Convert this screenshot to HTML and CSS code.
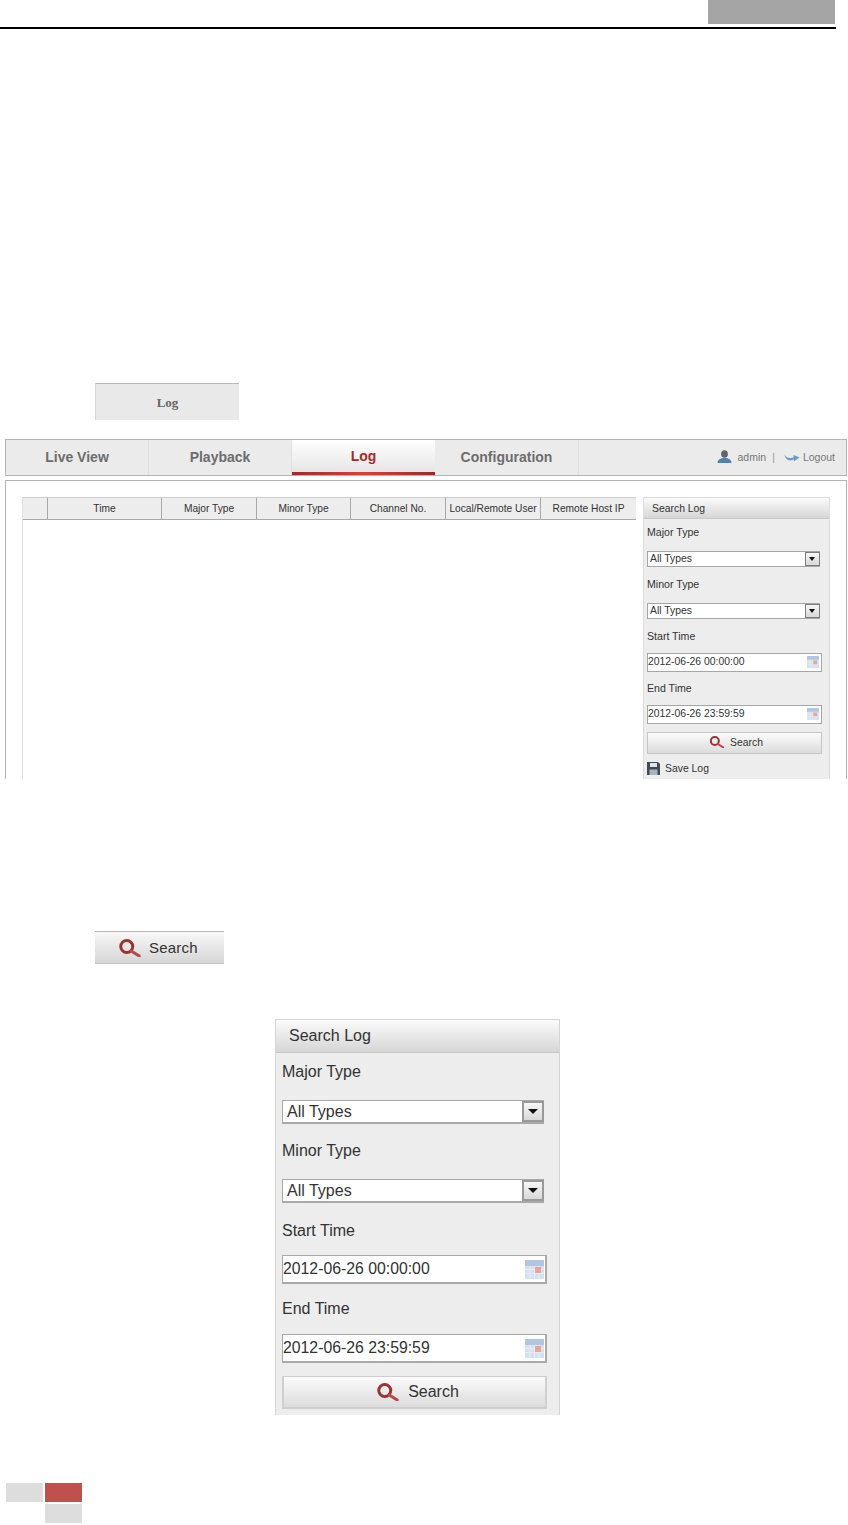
FILE: index.html
```html
<!DOCTYPE html>
<html lang="en">
<head>
<meta charset="utf-8">
<title>Log</title>
<link rel="stylesheet" href="styles.css">
</head>
<body>
<svg class="defs" width="0" height="0" aria-hidden="true">
  <defs>
    <symbol id="i-search" viewBox="1.5 0 22.5 18">
      <circle cx="9.5" cy="7.5" r="6" fill="none" stroke="#9a3336" stroke-width="3"/>
      <path d="M14 12l8 5" fill="none" stroke="#b8474a" stroke-width="3" stroke-linecap="round"/>
    </symbol>
    <symbol id="i-cal" viewBox="0 0 19 19">
      <rect x="0" y="0" width="19" height="19" rx="1" fill="#d6e0ee"/>
      <rect x="0" y="0" width="19" height="6" fill="#b3c6df"/>
      <path d="M0 9.5h19M0 13.5h19M5 6v13M9.5 6v13M14 6v13" stroke="#e9eef5" stroke-width="1"/>
      <rect x="10" y="7" width="6" height="6" fill="#eba598"/>
    </symbol>
  </defs>
</svg>

<header class="page-head">
  <div class="chapter-tag"></div>
</header>
<div class="page-rule"></div>

<div class="log-tab-shot">Log</div>

<section class="app">
  <nav class="tabs">
    <div class="tab">Live View</div>
    <div class="tab">Playback</div>
    <div class="tab tab-active">Log</div>
    <div class="tab tab-last">Configuration</div>
    <div class="user">
      <svg class="user-icon" viewBox="0 0 15 13" aria-hidden="true">
        <ellipse cx="7.5" cy="4" rx="3.4" ry="3.8" fill="#5f6468"/>
        <path d="M0.5 13c0-3.4 3-5 7-5s7 1.6 7 5z" fill="#4f81b5"/>
      </svg>
      <span>admin</span>
      <span class="user-sep">|</span>
      <svg class="logout-icon" viewBox="0 0 16 10" aria-hidden="true">
        <path d="M0.5 2.5C2 6 6 6.5 9.5 5.5V3L15.5 5.6 9.8 9.5V7.6C6 9.4 1.5 8.4 0.5 2.5z" fill="#6f9ac6"/>
      </svg>
      <span>Logout</span>
    </div>
  </nav>

  <div class="content">
    <div class="log-table">
      <div class="log-head">
        <div class="th"></div>
        <div class="th">Time</div>
        <div class="th">Major Type</div>
        <div class="th">Minor Type</div>
        <div class="th">Channel No.</div>
        <div class="th">Local/Remote User</div>
        <div class="th">Remote Host IP</div>
      </div>
    </div>

    <aside class="sp">
      <div class="sp-title">Search Log</div>
      <div class="sp-body">
        <div class="sp-label">Major Type</div>
        <div class="sp-select"><span class="sp-value">All Types</span><span class="sp-arrow"></span></div>
        <div class="sp-label">Minor Type</div>
        <div class="sp-select"><span class="sp-value">All Types</span><span class="sp-arrow"></span></div>
        <div class="sp-label">Start Time</div>
        <div class="sp-date"><span>2012-06-26 00:00:00</span><svg class="sp-cal"><use href="#i-cal"/></svg></div>
        <div class="sp-label">End Time</div>
        <div class="sp-date"><span>2012-06-26 23:59:59</span><svg class="sp-cal"><use href="#i-cal"/></svg></div>
        <div class="sp-button"><svg class="sp-mag"><use href="#i-search"/></svg><span>Search</span></div>
        <div class="sp-save">
          <svg class="save-icon" viewBox="0 0 13 13" aria-hidden="true">
            <path d="M0 0h11l2 2v11H0z" fill="#3f4a54"/>
            <rect x="3" y="1" width="7" height="4" fill="#dfe4e8"/>
            <rect x="2.5" y="7.5" width="8" height="5.5" fill="#aab4bc"/>
          </svg>
          <span>Save Log</span>
        </div>
      </div>
    </aside>
  </div>
</section>

<div class="search-shot"><svg class="search-shot-icon"><use href="#i-search"/></svg><span>Search</span></div>

<aside class="sp sp-large">
  <div class="sp-title">Search Log</div>
  <div class="sp-body">
    <div class="sp-label">Major Type</div>
    <div class="sp-select"><span class="sp-value">All Types</span><span class="sp-arrow"></span></div>
    <div class="sp-label">Minor Type</div>
    <div class="sp-select"><span class="sp-value">All Types</span><span class="sp-arrow"></span></div>
    <div class="sp-label">Start Time</div>
    <div class="sp-date"><span>2012-06-26 00:00:00</span><svg class="sp-cal"><use href="#i-cal"/></svg></div>
    <div class="sp-label">End Time</div>
    <div class="sp-date"><span>2012-06-26 23:59:59</span><svg class="sp-cal"><use href="#i-cal"/></svg></div>
    <div class="sp-button"><svg class="sp-mag"><use href="#i-search"/></svg><span>Search</span></div>
  </div>
</aside>

<footer class="page-foot">
  <div class="foot-cell"></div>
  <div class="foot-cell foot-red"></div>
  <div class="foot-cell foot-low"></div>
</footer>
</body>
</html>
```
FILE: styles.css
```css
* { box-sizing: border-box; }
html, body { margin: 0; padding: 0; background: #fff; }
body {
  width: 848px;
  height: 1525px;
  overflow: hidden;
  font-family: "Liberation Sans", Arial, sans-serif;
  color: #333;
}
.defs { display: block; height: 0; }

/* page furniture */
.page-head { display: flex; justify-content: flex-end; padding-right: 13px; }
.chapter-tag { width: 127px; height: 24px; background: #a5a5a5; }
.page-rule { width: 836px; height: 2px; margin-top: 3px; background: #000; }

.log-tab-shot {
  width: 144px;
  height: 37px;
  margin: 354px 0 0 95px;
  padding-top: 1px;
  background: #e9e9e9;
  border-top: 1px solid #b9b9b9;
  border-left: 1px solid #d8d8d8;
  display: flex;
  align-items: center;
  justify-content: center;
  font: bold 13px "Liberation Serif", "Times New Roman", serif;
  color: #666;
}

/* app screenshot */
.app { width: 842px; height: 340px; margin: 19px 0 0 5px; overflow: hidden; }
.tabs {
  display: flex;
  height: 37px;
  background: #ebebeb;
  border: 1px solid #b4b4b4;
}
.tab {
  width: 143px;
  padding-bottom: 2px;
  display: flex;
  align-items: center;
  justify-content: center;
  border-right: 1px solid #e0e0e0;
  font-size: 14px;
  font-weight: bold;
  color: #6d6d6d;
}
.tab-last { width: 144px; }
.tab-active {
  padding-bottom: 0;
  background: linear-gradient(#fff, #e6e6e6);
  color: #a8282c;
  border-right: 0;
  border-bottom: 3px solid #c8302f;
  border-image: linear-gradient(90deg, #9c2a2c, #d9403a 50%, #9c2a2c) 1;
}
.user {
  margin-left: auto;
  display: flex;
  align-items: center;
  padding: 0 11px 2px 0;
  font-size: 10.5px;
  color: #777;
}
.user-icon { width: 15px; height: 13px; margin-right: 6px; }
.user-sep { margin: 0 9px 0 6px; color: #999; }
.logout-icon { width: 16px; height: 10px; margin-right: 3px; }

.content {
  display: flex;
  gap: 7px;
  height: 299px;
  margin-top: 4px;
  padding: 16px 16px 0;
  border: 1px solid #b4b4b4;
  border-bottom: 0;
}
.log-table { width: 614px; border-left: 1px solid #e0e0e0; }
.log-head {
  display: grid;
  grid-template-columns: 25px 114px 95px 94px 95px 95px 1fr;
  height: 23px;
  background: #ededed;
  border-top: 1px solid #cfcfcf;
  border-bottom: 1px solid #a8a8a8;
}
.th {
  display: flex;
  align-items: center;
  justify-content: center;
  border-right: 1px solid #a8a8a8;
  font-size: 10.2px;
  color: #333;
  white-space: nowrap;
}
.th:last-child { border-right: 0; }

/* search panel, small size */
.sp {
  width: 187px;
  height: 282px;
  background: #ededed;
  border: 1px solid #dcdcdc;
  border-bottom: 0;
  font-size: 10.4px;
  color: #333;
}
.sp-title {
  height: 21px;
  padding-left: 8px;
  display: flex;
  align-items: center;
  background: linear-gradient(#fbfbfb, #d6d6d6);
  border-bottom: 1px solid #c8c8c8;
}
.sp-body { padding: 0 3px; }
.sp-label { height: 16px; line-height: 14px; margin-top: 10px; font-size: 10.6px; }
.sp-label:first-child { margin-top: 6px; }
.sp-date + .sp-label { margin-top: 9px; }
.sp-select {
  display: flex;
  width: 173px;
  height: 16px;
  margin-top: 10px;
  background: #fff;
  border: 1px solid #a6a6a6;
  border-right: 0;
}
.sp-value { flex: 1; padding-left: 2px; line-height: 14px; }
.sp-arrow {
  position: relative;
  width: 15px;
  background: linear-gradient(#f6f6f6, #d8d8d8);
  border: 1px solid #7d7d7d;
}
.sp-arrow::after {
  content: "";
  position: absolute;
  left: 3px;
  top: 4px;
  border-style: solid;
  border-width: 4px 3.5px 0;
  border-color: #111 transparent transparent;
}
.sp-date {
  display: flex;
  align-items: center;
  justify-content: space-between;
  width: 175px;
  height: 19px;
  margin-top: 8px;
  padding: 0 2px 2px 0;
  background: #fff;
  border: 1px solid #a6a6a6;
}
.sp-cal { width: 12px; height: 12px; }
.sp-button {
  display: flex;
  align-items: center;
  justify-content: center;
  gap: 5px;
  width: 175px;
  height: 22px;
  margin-top: 8px;
  padding: 0 0 2px 3px;
  background: linear-gradient(#fbfbfb, #dcdcdc);
  border: 1px solid #c6c6c6;
}
.sp-mag { width: 16px; height: 12px; }
.sp-save {
  display: flex;
  align-items: center;
  gap: 5px;
  margin-top: 8px;
}
.save-icon { width: 13px; height: 13px; }

/* search button crop */
.search-shot {
  display: flex;
  align-items: center;
  gap: 7px;
  width: 129px;
  height: 33px;
  margin: 152px 0 0 95px;
  padding-left: 23px;
  background: linear-gradient(#f8f8f8, #d6d6d6);
  border-top: 1px solid #b9b9b9;
  border-bottom: 1px solid #c4c4c4;
  font-size: 15px;
  letter-spacing: 0.2px;
  color: #333;
}
.search-shot-icon { width: 24px; height: 18px; }

/* search panel, enlarged */
.sp-large {
  width: 285px;
  height: 396px;
  margin: 55px 0 0 275px;
  font-size: 16px;
  border-width: 1px;
  border-top: 1px solid #d0d0d0;
  border-color: #d4d4d4;
}
.sp-large .sp-title { height: 33px; padding-left: 13px; border-bottom-color: #c8c8c8; }
.sp-large .sp-body { padding: 0 6px; }
.sp-large .sp-label { height: 20px; line-height: 20px; margin-top: 18px; font-size: 16px; }
.sp-large .sp-select + .sp-label { margin-top: 17px; }
.sp-large .sp-select ~ .sp-select + .sp-label { margin-top: 18px; }
.sp-large .sp-date + .sp-label { margin-top: 15px; }
.sp-large .sp-label:first-child { margin-top: 9px; }
.sp-large .sp-select {
  width: 262px;
  height: 24px;
  margin-top: 18px;
  border-width: 1px 0 2px 1px;
  border-style: solid;
  border-color: #a9a9a9;
}
.sp-large .sp-value { padding-left: 4px; line-height: 22px; }
.sp-large .sp-arrow { width: 22px; border: 2px solid #999; }
.sp-large .sp-arrow::after { left: 4px; top: 6px; border-width: 5px 5px 0; }
.sp-large .sp-date {
  width: 265px;
  height: 29px;
  margin-top: 14px;
  padding: 0 1px 0 0;
  border: 2px solid #a9a9a9;
  border-width: 1px 2px 2px 1px;
  font-size: 15.8px;
}
.sp-large .sp-label + .sp-date ~ .sp-label + .sp-date { margin-top: 15px; }
.sp-large .sp-cal { width: 19px; height: 19px; }
.sp-large .sp-button {
  width: 265px;
  height: 33px;
  margin-top: 13px;
  padding: 0 0 0 6px;
  gap: 8px;
  border: 2px solid #cfcfcf;
  border-width: 1px 2px 2px 2px;
}
.sp-large .sp-mag { width: 24px; height: 18px; }

/* footer */
.page-foot {
  display: grid;
  grid-template-columns: 37px 37px;
  grid-auto-rows: 19px;
  column-gap: 2px;
  row-gap: 2px;
  margin: 68px 0 0 6px;
}
.foot-cell { background: #dddddd; }
.foot-red { background: #c0504d; }
.foot-low { grid-column: 2; }
```
